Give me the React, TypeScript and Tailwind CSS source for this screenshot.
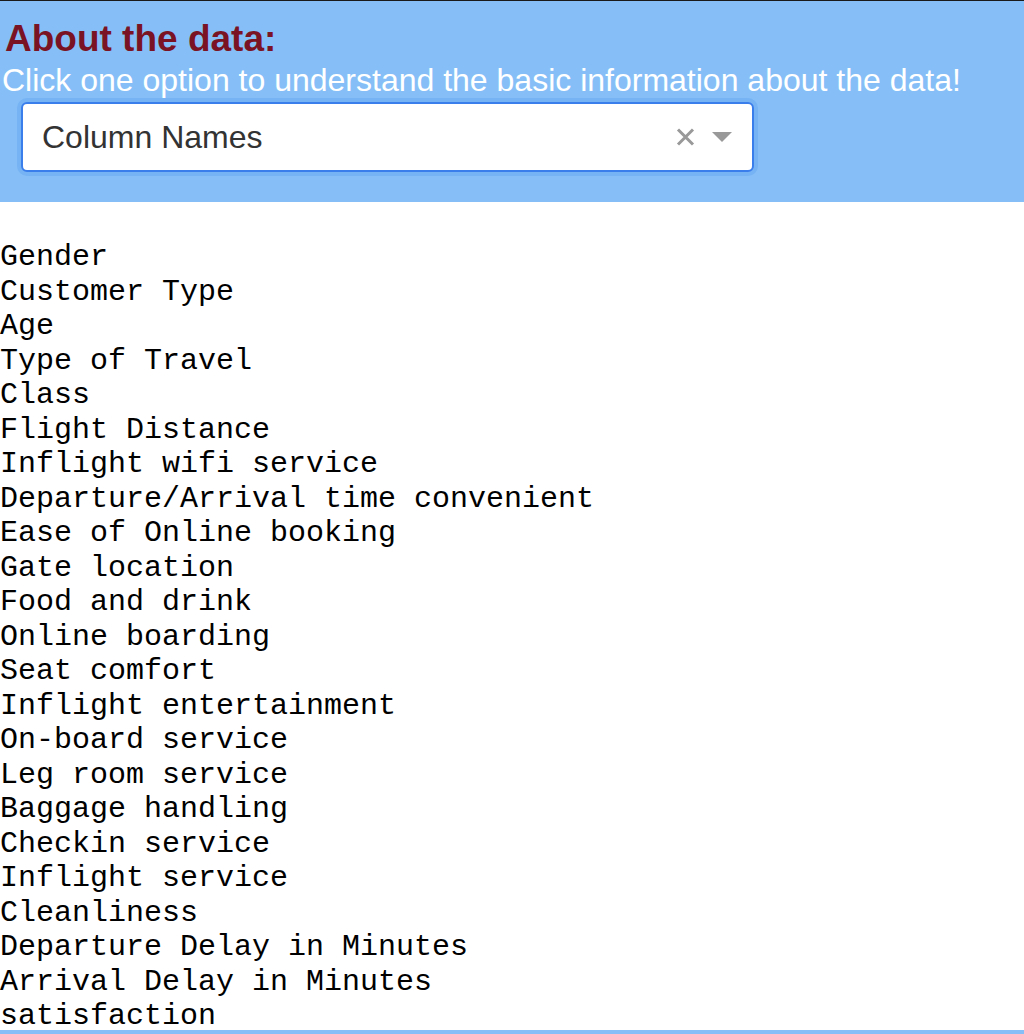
import React from 'react';

const columns = [
  'Gender',
  'Customer Type',
  'Age',
  'Type of Travel',
  'Class',
  'Flight Distance',
  'Inflight wifi service',
  'Departure/Arrival time convenient',
  'Ease of Online booking',
  'Gate location',
  'Food and drink',
  'Online boarding',
  'Seat comfort',
  'Inflight entertainment',
  'On-board service',
  'Leg room service',
  'Baggage handling',
  'Checkin service',
  'Inflight service',
  'Cleanliness',
  'Departure Delay in Minutes',
  'Arrival Delay in Minutes',
  'satisfaction',
];

export default function App() {
  return (
    <div className="min-h-[1034px] bg-white font-['Liberation_Sans',Arial,sans-serif] overflow-hidden">
      {/* header */}
      <div className="border-t border-[#1a1a1a] bg-[#86bff7] pt-[17px] pb-[30px]">
        <h3 className="pl-[5px] text-[37px] leading-[42px] font-bold text-[#7a1424]">About the data:</h3>
        <p className="mt-[3px] pl-[2px] text-[32px] leading-[34px] text-white">
          Click one option to understand the basic information about the data!
        </p>
        <div className="mt-[5px] ml-[21px] flex h-[70px] w-[733px] items-center rounded-[6px] border-2 border-[#3a7eec] bg-white pl-[19px] pr-[20px] shadow-[0_0_0_4px_#76b3f4]">
          <span className="flex-1 text-[32px] leading-[34.5px] text-[#333333]">Column Names</span>
          <svg width="19" height="18" viewBox="0 0 19 18" className="mr-[17px]">
            <path d="M2 1.5 L17 16.5 M17 1.5 L2 16.5" stroke="#999999" strokeWidth="3" />
          </svg>
          <svg width="20" height="10" viewBox="0 0 20 10">
            <path d="M0 0 L20 0 L10 10 Z" fill="#999999" />
          </svg>
        </div>
      </div>

      {/* column list */}
      <div className="mt-[38px] font-['Liberation_Mono','Courier_New',monospace] text-[30px] leading-[34.5px] text-black whitespace-pre">
        {columns.map((c) => (
          <div key={c}>{c}</div>
        ))}
      </div>
      <div className="-mt-[4px] h-[4px] bg-[#86bff7]" />
    </div>
  );
}
